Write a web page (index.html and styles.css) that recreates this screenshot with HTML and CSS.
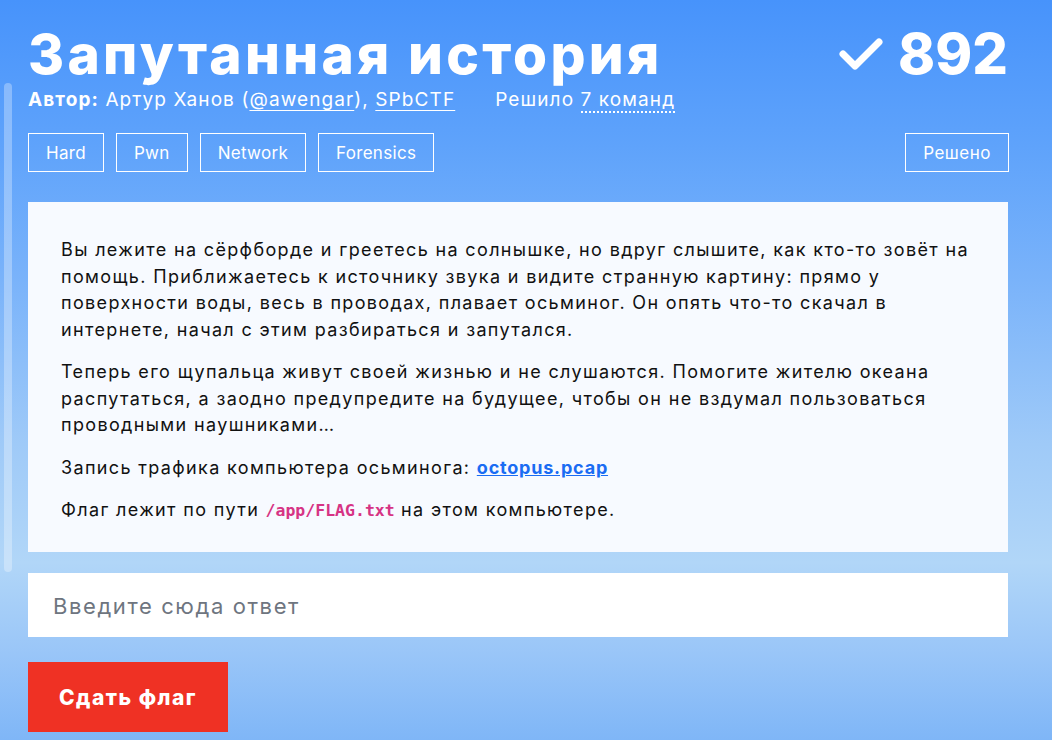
FILE: index.html
```html
<!DOCTYPE html>
<html lang="ru">
<head>
<meta charset="utf-8">
<title>Запутанная история</title>
<link rel="stylesheet" href="styles.css">
</head>
<body>
<div class="scrollbar"></div>
<main class="task">
  <header class="head">
    <div class="head-main">
      <h1 class="title">Запутанная история</h1>
      <div class="meta">
        <span class="author"><b>Автор:</b> Артур Ханов (<a href="#">@awengar</a>), <a href="#">SPbCTF</a></span>
        <span class="solved">Решило <span class="dotted">7 команд</span></span>
      </div>
    </div>
    <div class="score">
      <svg class="check" viewBox="0 0 46 34" width="46" height="34"><path d="M5 17 L17 29 L41 5" fill="none" stroke="#fff" stroke-width="7" stroke-linecap="round" stroke-linejoin="round"/></svg>
      <span class="points">892</span>
    </div>
  </header>
  <div class="tags">
    <span class="tag">Hard</span>
    <span class="tag">Pwn</span>
    <span class="tag">Network</span>
    <span class="tag">Forensics</span>
    <span class="tag tag-status">Решено</span>
  </div>
  <section class="card">
    <p>Вы лежите на сёрфборде и греетесь на солнышке, но вдруг слышите, как кто-то зовёт на помощь. Приближаетесь к источнику звука и видите странную картину: прямо у поверхности воды, весь в проводах, плавает осьминог. Он опять что-то скачал в интернете, начал с этим разбираться и запутался.</p>
    <p>Теперь его щупальца живут своей жизнью и не слушаются. Помогите жителю океана распутаться, а заодно предупредите на будущее, чтобы он не вздумал пользоваться проводными наушниками…</p>
    <p>Запись трафика компьютера осьминога: <a class="file" href="#">octopus.pcap</a></p>
    <p>Флаг лежит по пути <code>/app/FLAG.txt</code> на этом компьютере.</p>
  </section>
  <input class="answer" type="text" placeholder="Введите сюда ответ">
  <button class="submit" type="button">Сдать флаг</button>
</main>
</body>
</html>
```
FILE: styles.css
```css
* { box-sizing: border-box; }
html, body { height: 100%; }
body {
  margin: 0;
  font-family: Inter, "Noto Sans", sans-serif;
  color: #fff;
  background: linear-gradient(180deg, #4793fb 0%, #5fa3fb 20%, #7ab3fa 38%, #9fcaf8 60%, #b1d6f8 76%, #9ac6f8 88%, #7fb6f7 100%);
  overflow: hidden;
}
.scrollbar {
  position: absolute;
  left: 4px;
  top: 83px;
  width: 8px;
  height: 489px;
  border-radius: 4px;
  background: rgba(255,255,255,0.3);
}
.task {
  width: 980px;
  margin-left: 28px;
  padding-top: 22px;
}
.head {
  display: flex;
  justify-content: space-between;
  align-items: flex-start;
}
.title {
  margin: 0;
  font-size: 55px;
  line-height: 64px;
  font-weight: 800;
  letter-spacing: 3.3px;
}
.meta {
  display: flex;
  gap: 40px;
  font-size: 19px;
  line-height: 24px;
  letter-spacing: 1.1px;
  margin-top: 2px;
}
.meta a { color: #fff; text-decoration: underline; text-underline-offset: 4px; text-decoration-thickness: 1px; }
.dotted { border-bottom: 2px dotted #fff; }
.score {
  display: flex;
  align-items: center;
  gap: 14px;
}
.points {
  font-size: 56px;
  line-height: 64px;
  font-weight: 800;
}
.tags {
  display: flex;
  gap: 12px;
  margin-top: 21px;
}
.tag {
  height: 39px;
  display: flex;
  align-items: center;
  padding: 0 17px;
  border: 1px solid #fff;
  font-size: 17px;
  letter-spacing: 0.3px;
}
.tag-status { margin-left: auto; margin-right: -1px; letter-spacing: 0.5px; }
.card {
  margin-top: 30px;
  background: #f7faff;
  color: #111;
  padding: 35px 33px 28px;
  font-size: 18px;
  line-height: 26.5px;
  letter-spacing: 1.35px;
}
.card p { margin: 0 0 16px; }
.card p:last-child { margin-bottom: 0; }
.file { color: #1a6cf3; font-weight: 700; letter-spacing: 0.8px; }
code {
  font-family: "DejaVu Sans Mono", monospace;
  color: #d63384;
  font-weight: 700;
  font-size: 16.5px;
  line-height: 1;
  letter-spacing: 0;
}
.answer {
  display: block;
  width: 100%;
  height: 64px;
  margin-top: 21px;
  border: 0;
  padding: 2px 25px 0;
  font-family: inherit;
  font-size: 22px;
  letter-spacing: 1.6px;
  background: #fff;
  outline: none;
}
.answer::placeholder { color: #6e7580; }
.submit {
  display: block;
  margin-top: 25px;
  width: 200px;
  height: 70px;
  border: 0;
  padding-top: 3px;
  background: #ef3124;
  color: #fff;
  font-family: inherit;
  font-size: 21px;
  font-weight: 800;
  letter-spacing: 1.5px;
}
```
